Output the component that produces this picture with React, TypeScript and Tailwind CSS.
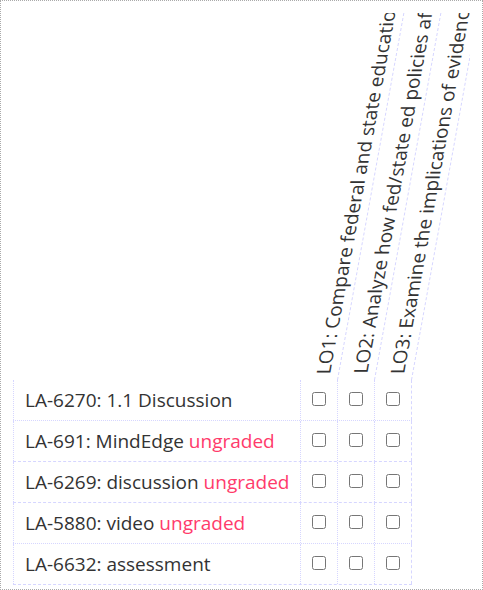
const outcomes = [
  'LO1: Compare federal and state education policies and their impact',
  'LO2: Analyze how fed/state ed policies affect local schools and districts',
  'LO3: Examine the implications of evidence-based decision making',
];

const rows = [
  { label: 'LA-6270: 1.1 Discussion', ungraded: false },
  { label: 'LA-691: MindEdge', ungraded: true },
  { label: 'LA-6269: discussion', ungraded: true },
  { label: 'LA-5880: video', ungraded: true },
  { label: 'LA-6632: assessment', ungraded: false },
];

export default function App() {
  return (
    <div className="w-[483px] h-[590px] border border-dotted border-[#aaa] p-[12px] font-['Open_Sans',sans-serif] text-[19px] text-[#333]">
      {/* header with slanted outcome names */}
      <div className="flex h-[367px] overflow-hidden">
        <div className="w-[288px] shrink-0" />
        {outcomes.map((o) => (
          <div
            key={o}
            className="w-[37px] h-[367px] shrink-0 overflow-hidden border-r border-dashed border-[#d6d6ff] origin-bottom-left skew-x-[-10.25deg] flex items-end pl-[9px] pb-[6px]"
          >
            <span className="[writing-mode:vertical-rl] rotate-180 whitespace-nowrap leading-[24px]">{o}</span>
          </div>
        ))}
      </div>

      {/* body rows */}
      <div className="w-[399px]">
        {rows.map((r, i) => (
          <div
            key={r.label}
            className={
              'flex h-[41px] border-b border-[#d6d6ff] ' +
              (i === 1 || i === 2 || i === 4 ? 'border-dashed' : 'border-dotted')
            }
          >
            <div className="w-[288px] shrink-0 border-l border-r border-dotted border-[#d6d6ff] pl-[11px] flex items-center">
              <span>
                {r.label}
                {r.ungraded && <span className="text-[#ff3b6b]"> ungraded</span>}
              </span>
            </div>
            {outcomes.map((o, j) => (
              <div
                key={o}
                className={
                  'w-[37px] shrink-0 border-r border-[#d6d6ff] flex items-center justify-center ' +
                  (j === 2 ? 'border-dashed' : 'border-dotted')
                }
              >
                <input type="checkbox" className="w-[14px] h-[14px] -mt-[3px]" />
              </div>
            ))}
          </div>
        ))}
      </div>
    </div>
  );
}
